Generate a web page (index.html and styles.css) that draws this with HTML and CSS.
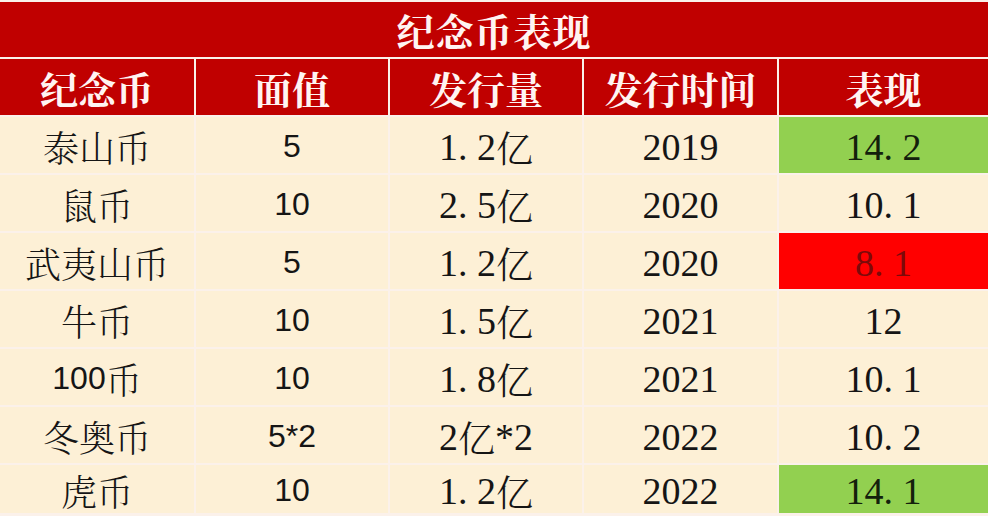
FILE: index.html
```html
<!DOCTYPE html>
<html lang="zh-CN">
<head>
<meta charset="utf-8">
<title>纪念币表现</title>
<link rel="stylesheet" href="styles.css">
</head>
<body>
<div class="sheet">
  <div class="title">纪念币表现</div>

  <div class="th">纪念币</div>
  <div class="th">面值</div>
  <div class="th">发行量</div>
  <div class="th">发行时间</div>
  <div class="th">表现</div>

  <div class="td cjk">泰山币</div>
  <div class="td sans">5</div>
  <div class="td num">1<span class="dot">.</span>2<span class="cjk">亿</span></div>
  <div class="td num">2019</div>
  <div class="td num good">14<span class="dot">.</span>2</div>

  <div class="td cjk">鼠币</div>
  <div class="td sans">10</div>
  <div class="td num">2<span class="dot">.</span>5<span class="cjk">亿</span></div>
  <div class="td num">2020</div>
  <div class="td num">10<span class="dot">.</span>1</div>

  <div class="td cjk">武夷山币</div>
  <div class="td sans">5</div>
  <div class="td num">1<span class="dot">.</span>2<span class="cjk">亿</span></div>
  <div class="td num">2020</div>
  <div class="td num bad">8<span class="dot">.</span>1</div>

  <div class="td cjk">牛币</div>
  <div class="td sans">10</div>
  <div class="td num">1<span class="dot">.</span>5<span class="cjk">亿</span></div>
  <div class="td num">2021</div>
  <div class="td num">12</div>

  <div class="td cjk"><span class="sans">100</span>币</div>
  <div class="td sans">10</div>
  <div class="td num">1<span class="dot">.</span>8<span class="cjk">亿</span></div>
  <div class="td num">2021</div>
  <div class="td num">10<span class="dot">.</span>1</div>

  <div class="td cjk">冬奥币</div>
  <div class="td sans">5*2</div>
  <div class="td num">2<span class="cjk">亿</span>*2</div>
  <div class="td num">2022</div>
  <div class="td num">10<span class="dot">.</span>2</div>

  <div class="td cjk">虎币</div>
  <div class="td sans">10</div>
  <div class="td num">1<span class="dot">.</span>2<span class="cjk">亿</span></div>
  <div class="td num">2022</div>
  <div class="td num good">14<span class="dot">.</span>1</div>
</div>
</body>
</html>
```

FILE: styles.css
```css
html, body {
  margin: 0;
  padding: 0;
  background: #fbf6ef;
}

.sheet {
  width: 988px;
  height: 516px;
  box-sizing: border-box;
  padding: 2px 0 3px 0;
  display: grid;
  grid-template-columns: 194px 192px 192px 193px 1fr;
  grid-template-rows: 55px 56px repeat(6, 56px) 48px;
  gap: 2px;
  background: #fbf1ea;
}

.title {
  grid-column: 1 / -1;
  background: #c00000;
  color: #fff4f2;
  font-family: "Noto Serif CJK SC", "Noto Sans CJK SC", sans-serif;
  font-weight: 700;
  font-size: 38px;
  display: flex;
  align-items: center;
  justify-content: center;
  letter-spacing: 1px;
}

.th {
  background: #c00000;
  color: #fff4f2;
  font-family: "Noto Serif CJK SC", "Noto Sans CJK SC", sans-serif;
  font-weight: 700;
  font-size: 38px;
  display: flex;
  align-items: center;
  justify-content: center;
}

.td {
  background: #fdf0d6;
  color: #151515;
  display: flex;
  align-items: center;
  justify-content: center;
  white-space: nowrap;
  padding-top: 3px;
}

.cjk {
  font-family: "Noto Serif CJK SC", "Noto Sans CJK SC", sans-serif;
  font-weight: 300;
  font-size: 36px;
}

.sans {
  font-family: "Liberation Sans", Arial, sans-serif;
  font-weight: 400;
  font-size: 32px;
}

.num {
  font-family: "Liberation Serif", "Times New Roman", serif;
  font-size: 38px;
}

.num .cjk {
  font-size: 37px;
}

.dot {
  margin-right: 0.25em;
}

.good {
  background: #92d050;
  color: #13200c;
}

.bad {
  background: #ff0000;
  color: #7c0a0a;
}
```
